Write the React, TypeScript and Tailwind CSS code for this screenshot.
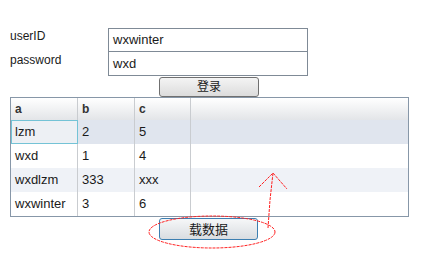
const rows = [
  { a: "lzm", b: "2", c: "5", bg: "bg-[#e0e5ee]", selected: true },
  { a: "wxd", b: "1", c: "4", bg: "bg-white", selected: false },
  { a: "wxdlzm", b: "333", c: "xxx", bg: "bg-[#eff2f7]", selected: false },
  { a: "wxwinter", b: "3", c: "6", bg: "bg-white", selected: false },
];

const font = { fontFamily: "'Liberation Sans', 'Noto Sans CJK SC', sans-serif" };

export default function App() {
  return (
    <div
      className="relative w-[448px] h-[265px] bg-white text-[#1a1a1a] overflow-hidden"
      style={font}
    >
      {/* login form */}
      <div className="flex flex-col pt-[28px] pl-[10px]">
        <div className="flex h-[24px]">
          <span className="w-[98px] text-[12px] leading-[14px] pt-[1px]">userID</span>
          <div className="w-[200px] h-[24px] border border-[#7f8a96] flex items-center pl-[4px] text-[13px]">
            wxwinter
          </div>
        </div>
        <div className="flex h-[24px]">
          <span className="w-[98px] text-[12px] leading-[14px] pt-[1px]">password</span>
          <div className="w-[200px] h-[24px] border border-[#7f8a96] border-t-0 flex items-center pl-[4px] text-[13px]">
            wxd
          </div>
        </div>
        <div className="flex h-[21px] pl-[149px] pt-[1px]">
          <button className="w-[100px] h-[20px] rounded-[3px] border border-[#707070] bg-gradient-to-b from-[#f4f4f4] to-[#dcdcdc] text-[12px] leading-none">
            登录
          </button>
        </div>
      </div>

      {/* data grid */}
      <div className="ml-[10px] w-[399px] border border-[#8797a8] text-[13px]">
        <div className="flex h-[22px] bg-gradient-to-b from-white to-[#e3e5e8] font-bold text-[#333] text-[12px]">
          <div className="w-[67px] border-r border-[#c9ccd0] pl-[4px] flex items-center">a</div>
          <div className="w-[57px] border-r border-[#c9ccd0] pl-[4px] flex items-center">b</div>
          <div className="w-[56px] border-r border-[#c9ccd0] pl-[4px] flex items-center">c</div>
          <div className="flex-1" />
        </div>
        {rows.map((r) => (
          <div key={r.a} className={`flex h-[24px] ${r.bg}`}>
            <div
              className={`w-[67px] flex items-center pl-[3px] ${
                r.selected ? "border border-[#74c3d6] bg-[#edf0f4]" : "border-r border-[#c9ccd0] pl-[4px]"
              }`}
            >
              {r.a}
            </div>
            <div className="w-[57px] border-r border-[#c9ccd0] pl-[4px] flex items-center">{r.b}</div>
            <div className="w-[56px] border-r border-[#c9ccd0] pl-[4px] flex items-center">{r.c}</div>
            <div className="flex-1" />
          </div>
        ))}
      </div>

      <div className="flex pl-[159px] pt-[1px]">
        <button className="w-[99px] h-[22px] rounded-[3px] border border-[#3c7fb1] bg-gradient-to-b from-[#f6f7f8] to-[#d9dde1] text-[13px] leading-none">
          载数据
        </button>
      </div>

      {/* red annotation */}
      <svg className="absolute left-0 top-0 pointer-events-none" width="448" height="265">
        <ellipse cx="212" cy="232" rx="63" ry="16" fill="none" stroke="#ff2020" strokeWidth="1" strokeDasharray="3 1" />
        <path d="M268 228 L270 200 L273 173" fill="none" stroke="#ff2020" strokeWidth="1" strokeDasharray="3 1" />
        <path d="M259 187 L273 173 L287 189" fill="none" stroke="#ff2020" strokeWidth="1" strokeDasharray="3 1" />
      </svg>
    </div>
  );
}
